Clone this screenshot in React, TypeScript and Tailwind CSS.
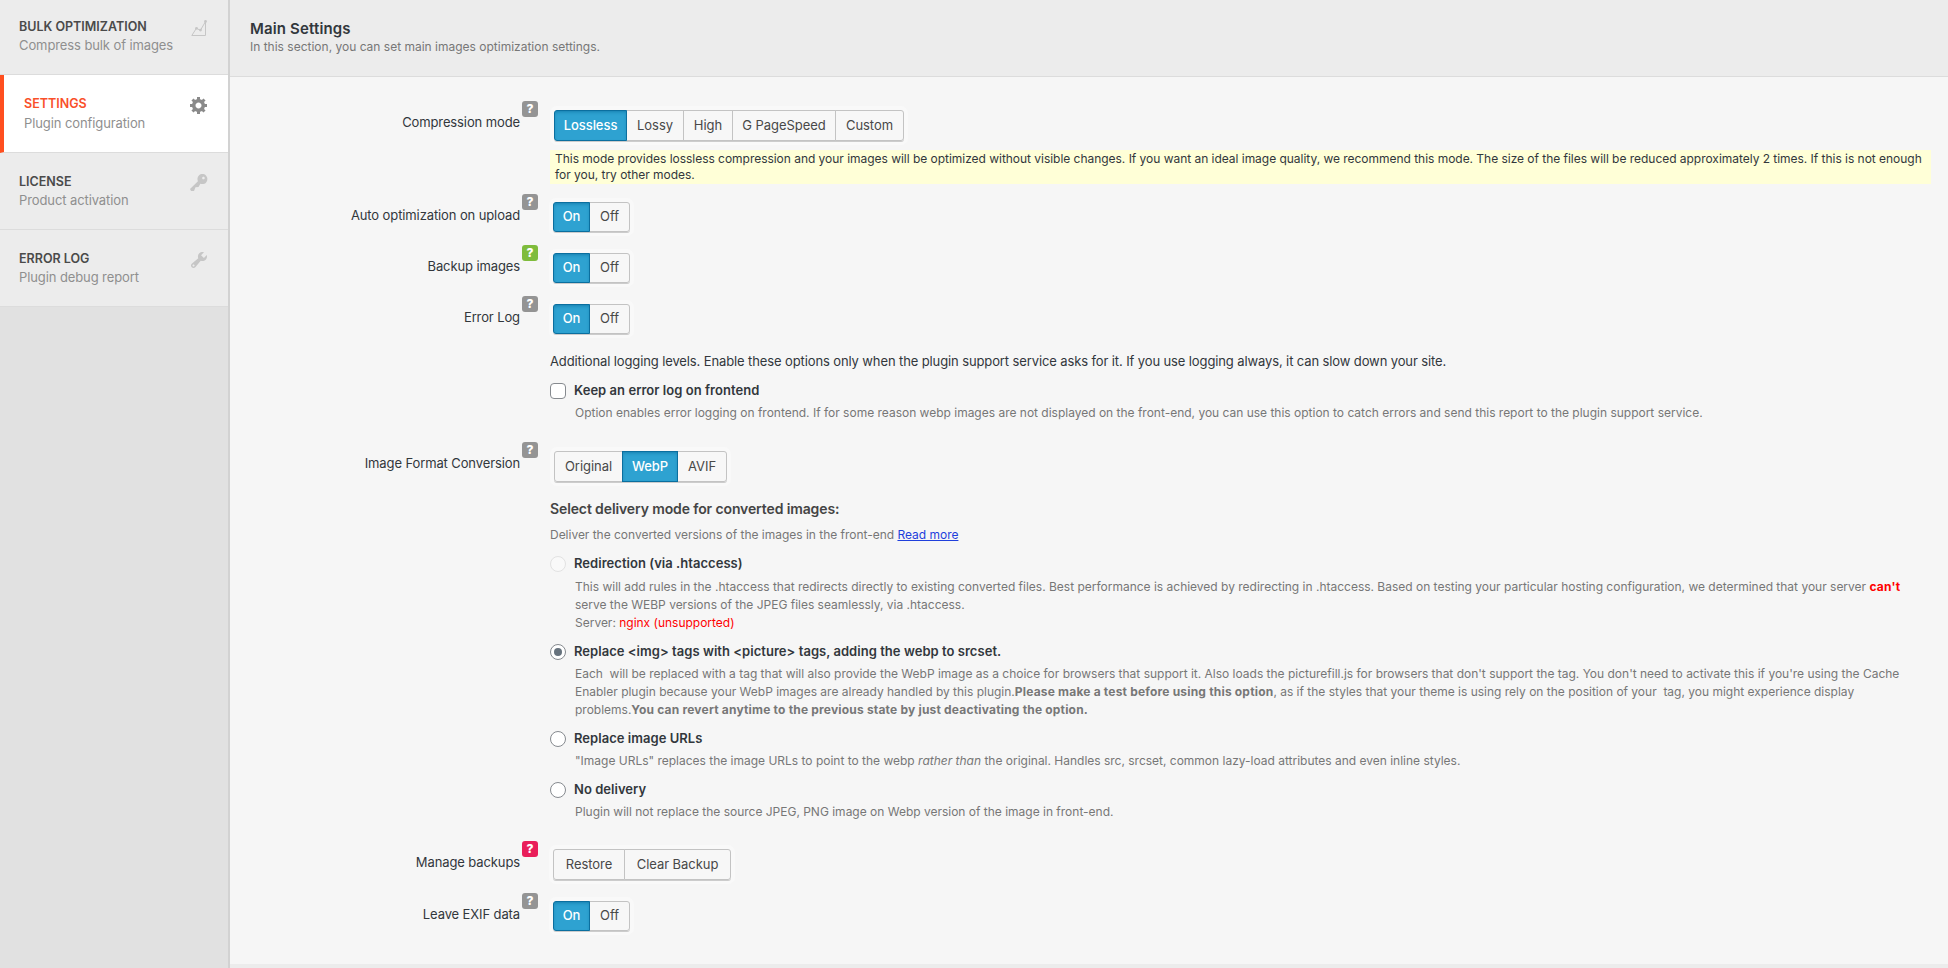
import { ReactNode } from "react";
import clsx from "clsx";

interface NavItemProps {
  title: string;
  hint: string;
  icon: ReactNode;
  active?: boolean;
  className?: string;
}

function NavItem({ title, hint, icon, active, className }: NavItemProps) {
  return (
    <a
      className={clsx(
        "flex justify-between border-b border-b-[#dcdcdc] pr-[19px]",
        active ? "border-l-4 border-l-[#ff4f1f] bg-white pl-5" : "bg-[#ececec] pl-[19px]",
        className
      )}
    >
      <div>
        <div
          className={clsx(
            "text-[12.5px] font-semibold",
            active ? "leading-5 text-[#f9502a]" : "leading-[19px] text-[#4a4a4a]"
          )}
        >
          {title}
        </div>
        <div className="text-[13px] leading-[19px] tracking-[-0.1px] text-[#8f8f8f]">{hint}</div>
      </div>
      <svg
        viewBox="0 0 20 20"
        className={clsx("mt-px size-5", active ? "text-[#8a8a8a]" : "text-[#c6c6c6]")}
        fill="currentColor"
      >
        {icon}
      </svg>
    </a>
  );
}

const chartIcon = (
  <>
    <path
      d="M2.8 17.5L7.4 10.3L11.4 12.3L16.5 3.6V17.5Z"
      fill="none"
      stroke="currentColor"
      strokeWidth="1"
    />
    <circle cx="7.5" cy="10.3" r="1.4" />
    <circle cx="11.5" cy="12.1" r="1.4" />
    <circle cx="16.5" cy="3.4" r="1.4" />
  </>
);

const gearIcon = (
  <path d="M18 12h-2.18c-.17.7-.44 1.35-.81 1.93l1.54 1.54-2.1 2.1-1.54-1.54c-.58.36-1.23.63-1.91.79V19H8v-2.18c-.68-.16-1.33-.43-1.91-.79l-1.54 1.54-2.12-2.12 1.54-1.54c-.36-.58-.63-1.23-.79-1.91H1V9.03h2.17c.16-.7.44-1.35.8-1.94L2.43 5.55l2.1-2.1 1.54 1.54c.58-.37 1.24-.64 1.93-.81V2h3v2.18c.68.16 1.33.43 1.91.79l1.54-1.54 2.12 2.12-1.54 1.54c.36.59.64 1.24.8 1.94H18V12zm-8.5 1.5c1.66 0 3-1.34 3-3s-1.34-3-3-3-3 1.34-3 3 1.34 3 3 3z" />
);

const keyIcon = (
  <path d="M16.95 2.58c1.96 1.95 1.96 5.12 0 7.07-1.51 1.51-3.75 1.84-5.59 1.01l-1.87 3.31-2.99.31L5 18H2l-1-2 7.95-7.69c-.92-1.87-.62-4.18.93-5.73 1.95-1.96 5.12-1.96 7.07 0zm-2.51 3.79c.74 0 1.33-.6 1.33-1.34 0-.73-.59-1.33-1.33-1.33-.73 0-1.33.6-1.33 1.33 0 .74.6 1.34 1.33 1.34z" />
);

const wrenchIcon = (
  <path d="M16.68 9.77c-1.34 1.34-3.3 1.67-4.95.99l-5.41 6.52c-.99.99-2.59.99-3.58 0s-.99-2.59 0-3.57l6.52-5.42c-.68-1.65-.35-3.61.99-4.95 1.28-1.28 3.12-1.62 4.72-1.06l-2.89 2.89 2.82 2.82 2.86-2.87c.53 1.58.18 3.39-1.08 4.65zM3.81 16.21c.4.39 1.04.39 1.43 0 .4-.4.4-1.04 0-1.43-.39-.4-1.03-.4-1.43 0-.39.39-.39 1.03 0 1.43z" />
);

interface RowProps {
  label: string;
  badge?: string;
  className: string;
  children: ReactNode;
}

function Row({ label, badge = "bg-[#949494]", className, children }: RowProps) {
  return (
    <div className={clsx("flex items-start", className)}>
      <div className="flex w-[308px] shrink-0 items-start justify-end gap-0.5">
        <span className="mt-[11px] text-[13px] leading-5 tracking-[-0.11px]">{label}</span>
        <span
          className={clsx(
            "flex size-4 items-center justify-center rounded-[3px] text-xs font-extrabold text-white",
            badge
          )}
        >
          ?
        </span>
      </div>
      <div className="ml-3 flex-1">{children}</div>
    </div>
  );
}

interface ButtonGroupProps {
  items: { label: string; width: string }[];
  selected?: string;
  className: string;
}

function ButtonGroup({ items, selected, className }: ButtonGroupProps) {
  return (
    <div
      className={clsx(
        "flex w-fit rounded-[3px] text-[13px] tracking-[-0.05px] shadow-[0_1px_0_#ccc,0_0_0_4px_#f9f9f9]",
        className
      )}
    >
      {items.map((item, i) => (
        <button
          key={item.label}
          className={clsx(
            "h-full border first:rounded-l-[3px] last:rounded-r-[3px]",
            i > 0 && "-ml-px",
            item.label === selected
              ? "z-1 border-[#0b6f9f] bg-[#2ea2d1] font-medium text-white shadow-[inset_0_2px_4px_-2px_#0b6f9f]"
              : "border-[#c3c3c3] bg-[#f7f7f7] text-[#484848]",
            item.width
          )}
        >
          {item.label}
        </button>
      ))}
    </div>
  );
}

function OnOff() {
  return (
    <ButtonGroup
      className="mt-2 ml-[3px] h-[30px]"
      selected="On"
      items={[
        { label: "On", width: "w-[37px]" },
        { label: "Off", width: "w-[41px]" },
      ]}
    />
  );
}

interface OptionProps {
  title: string;
  square?: boolean;
  checked?: boolean;
  disabled?: boolean;
  className: string;
  children: ReactNode;
}

function Option({ title, square, checked, disabled, className, children }: OptionProps) {
  return (
    <div className={className}>
      <div className="flex items-start gap-2">
        <span
          className={clsx(
            "flex size-4 items-center justify-center border",
            square ? "rounded-[4px]" : "rounded-full",
            disabled ? "border-[#e2e2e2] bg-[#f9f9f9]" : "border-[#868a8f] bg-white"
          )}
        >
          {checked && <span className="size-2 rounded-full bg-[#66727d]" />}
        </span>
        <span className="text-[13px] leading-[14px] font-semibold tracking-[0.04px]">{title}</span>
      </div>
      <p
        className={clsx(
          "ml-[25px] text-xs leading-[18px] tracking-[-0.007px] whitespace-nowrap text-[#777]",
          disabled ? "mt-1.5" : "mt-[5px]"
        )}
      >
        {children}
      </p>
    </div>
  );
}

export default function App() {
  return (
    <div className="flex h-[968px] w-[1948px] overflow-hidden bg-[#f6f6f6] font-[Inter,sans-serif] text-[#32373c]">
      <aside className="w-[230px] shrink-0 border-r-2 border-[#d2d2d2] bg-[#e1e1e1]">
        <NavItem
          title="BULK OPTIMIZATION"
          hint="Compress bulk of images"
          icon={chartIcon}
          className="h-[75px] pt-[17px]"
        />
        <NavItem
          title="SETTINGS"
          hint="Plugin configuration"
          icon={gearIcon}
          active
          className="h-[78px] pt-[19px]"
        />
        <NavItem
          title="LICENSE"
          hint="Product activation"
          icon={keyIcon}
          className="h-[77px] pt-[19px]"
        />
        <NavItem
          title="ERROR LOG"
          hint="Plugin debug report"
          icon={wrenchIcon}
          className="h-[77px] pt-[19px]"
        />
      </aside>

      <main className="flex flex-1 flex-col">
        <header className="h-[77px] border-b border-[#dcdcdc] bg-[#ececec] pt-[19px] pl-5">
          <h1 className="text-[15px] leading-5 font-semibold tracking-[0.15px]">Main Settings</h1>
          <p className="text-xs leading-4 text-[#777]">
            In this section, you can set main images optimization settings.
          </p>
        </header>

        <div className="flex-1 pt-6">
          <Row label="Compression mode" className="h-[93px]">
            <ButtonGroup
              className="mt-[9px] ml-1 h-[31px]"
              selected="Lossless"
              items={[
                { label: "Lossless", width: "w-[73px]" },
                { label: "Lossy", width: "w-[58px]" },
                { label: "High", width: "w-[50px]" },
                { label: "G PageSpeed", width: "w-[104px]" },
                { label: "Custom", width: "w-[69px]" },
              ]}
            />
            <p className="mt-[9px] mr-[17px] bg-[#ffffd7] px-[5px] py-px text-xs leading-4 tracking-[-0.03px] whitespace-nowrap">
              This mode provides lossless compression and your images will be optimized without
              visible changes. If you want an ideal image quality, we recommend this mode. The size
              of the files will be reduced approximately 2 times. If this is not enough
              <br />
              for you, try other modes.
            </p>
          </Row>

          <Row label="Auto optimization on upload" className="h-[51px]">
            <OnOff />
          </Row>

          <Row label="Backup images" badge="bg-[#7fbc3c]" className="h-[51px]">
            <OnOff />
          </Row>

          <Row label="Error Log" className="h-[146px]">
            <OnOff />
            <p className="mt-[17px] text-[13px] leading-5 tracking-[-0.115px]">
              Additional logging levels. Enable these options only when the plugin support service
              asks for it. If you use logging always, it can slow down your site.
            </p>
            <Option title="Keep an error log on frontend" square className="mt-3">
              Option enables error logging on frontend. If for some reason webp images are not
              displayed on the front-end, you can use this option to catch errors and send this
              report to the plugin support service.
            </Option>
          </Row>

          <Row label="Image Format Conversion" className="h-[399px]">
            <ButtonGroup
              className="mt-[9px] ml-1 h-[31px]"
              selected="WebP"
              items={[
                { label: "Original", width: "w-[69px]" },
                { label: "WebP", width: "w-[56px]" },
                { label: "AVIF", width: "w-[50px]" },
              ]}
            />
            <h2 className="mt-[17px] text-sm leading-5 font-semibold tracking-[-0.12px] text-[#444]">
              Select delivery mode for converted images:
            </h2>
            <p className="mt-2 text-xs leading-4 tracking-[-0.02px] text-[#777]">
              Deliver the converted versions of the images in the front-end{" "}
              <a className="text-[#1f3fdc] underline">Read more</a>
            </p>
            <Option title="Redirection (via .htaccess)" disabled className="mt-[13px]">
              This will add rules in the .htaccess that redirects directly to existing converted
              files. Best performance is achieved by redirecting in .htaccess. Based on testing your
              particular hosting configuration, we determined that your server{" "}
              <b className="tracking-[0.19px] text-[#f00]">can't</b>
              <br />
              serve the WEBP versions of the JPEG files seamlessly, via .htaccess.
              <br />
              Server: <span className="text-[#f00]">nginx (unsupported)</span>
            </Option>
            <Option
              title="Replace <img> tags with <picture> tags, adding the webp to srcset."
              checked
              className="mt-3"
            >
              Each &nbsp;will be replaced with a tag that will also provide the WebP image as a
              choice for browsers that support it. Also loads the picturefill.js for browsers that
              don't support the tag. You don't need to activate this if you're using the Cache
              <br />
              Enabler plugin because your WebP images are already handled by this plugin.
              <b className="tracking-[0.19px]">Please make a test before using this option</b>, as
              if the styles that your theme is using rely on the position of your &nbsp;tag, you
              might experience display
              <br />
              problems.
              <b className="tracking-[0.19px]">
                You can revert anytime to the previous state by just deactivating the option.
              </b>
            </Option>
            <Option title="Replace image URLs" className="mt-3">
              "Image URLs" replaces the image URLs to point to the webp <i>rather than</i> the
              original. Handles src, srcset, common lazy-load attributes and even inline styles.
            </Option>
            <Option title="No delivery" className="mt-3">
              Plugin will not replace the source JPEG, PNG image on Webp version of the image in
              front-end.
            </Option>
          </Row>

          <Row label="Manage backups" badge="bg-[#e91e5a]" className="h-[52px]">
            <ButtonGroup
              className="mt-2 ml-[3px] h-[31px]"
              items={[
                { label: "Restore", width: "w-[72px]" },
                { label: "Clear Backup", width: "w-[107px]" },
              ]}
            />
          </Row>

          <Row label="Leave EXIF data" className="h-[51px]">
            <OnOff />
          </Row>
        </div>

        <footer className="h-1 bg-[#ececec]" />
      </main>
    </div>
  );
}
